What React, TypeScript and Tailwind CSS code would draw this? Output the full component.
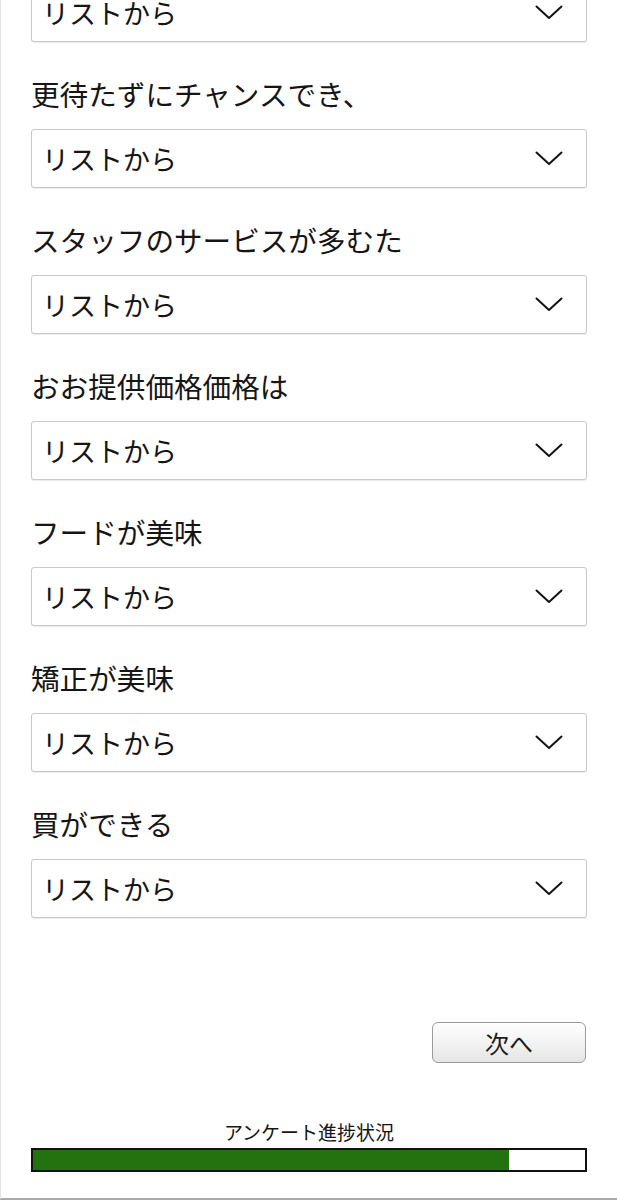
import React from 'react';

const questions = [
  '',
  '更待たずにチャンスでき、',
  'スタッフのサービスが多むた',
  'おお提供価格価格は',
  'フードが美味',
  '矯正が美味',
  '買ができる',
];

const Chevron = () => (
  <svg width="28" height="15" viewBox="0 0 28 15" fill="none" className="shrink-0">
    <polyline points="1.5,1.5 14,13 26.5,1.5" stroke="#141414" strokeWidth="2" strokeLinecap="round" strokeLinejoin="round" />
  </svg>
);

const SelectBox = () => (
  <div className="flex h-[59px] items-center justify-between rounded-[3px] border border-[#c9c9c9] bg-white pl-[10px] pr-[23px] shadow-[0_1px_1px_rgba(0,0,0,0.08)]">
    <span className="text-[27px] leading-none text-[#151515]">リストから</span>
    <Chevron />
  </div>
);

export default function App() {
  const progress = 86.3;

  return (
    <div
      className="h-[1200px] w-[617px] overflow-hidden bg-white"
      style={{ fontFamily: '"Noto Sans CJK JP", "Noto Sans", sans-serif' }}
    >
      <div className="flex h-[1200px] flex-col border-b-2 border-l border-b-[#a9a9a9] border-l-[#e3e3e3]">
        {/* Questions */}
        <div className="-mt-[17px] px-[30px]">
          {questions.map((q, i) => (
            <div key={i}>
              {i > 0 && (
                <p className="mb-[17px] mt-[34px] h-[36px] whitespace-nowrap text-[28.6px] leading-[36px] text-[#151515]">{q}</p>
              )}
              <SelectBox />
            </div>
          ))}
        </div>

        {/* Next button */}
        <div className="mt-[104px] flex justify-end pr-[31px]">
          <button className="h-[41px] w-[154px] rounded-[6px] border border-[#9b9b9b] bg-gradient-to-b from-white to-[#e6e6e6] text-[24px] leading-none text-[#1c1c1c] shadow-[inset_0_1px_0_#fff]">
            次へ
          </button>
        </div>

        {/* Progress */}
        <div className="mt-[57px] px-[30px]">
          <p className="text-center text-[19px] leading-[24px] text-[#151515]">アンケート進捗状況</p>
          <div className="mt-[4px] h-[24px] w-full border-2 border-[#111] bg-white">
            <div className="h-full bg-[#22720f]" style={{ width: `${progress}%` }} />
          </div>
        </div>
      </div>
    </div>
  );
}
